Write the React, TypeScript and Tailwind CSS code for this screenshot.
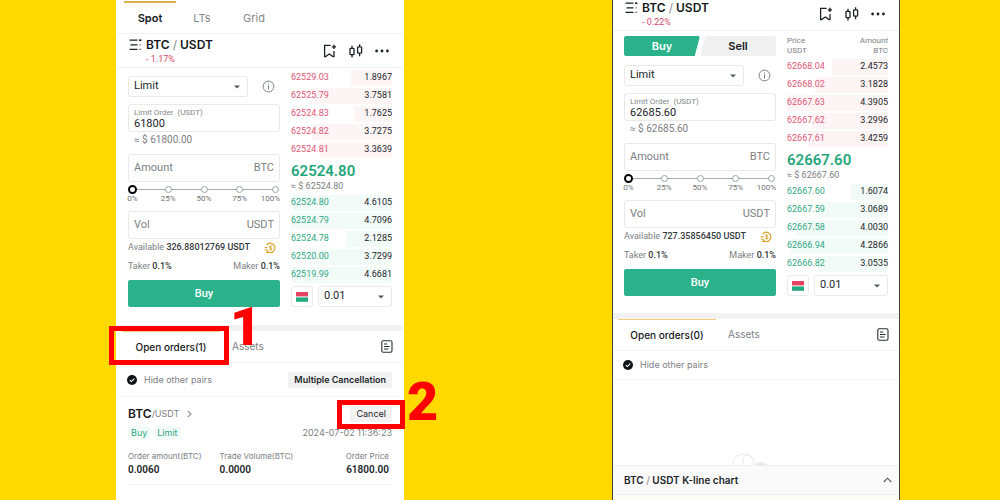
import { useId, useState } from "react";
import type { ReactNode } from "react";

type Level = { price: string; amount: string };

type Market = {
  change: string;
  limitPrice: string;
  available: string;
  last: string;
  depth: number;
  asks: Level[];
  bids: Level[];
};

const pending: Market = {
  change: "- 1.17%",
  limitPrice: "61800",
  available: "326.88012769 USDT",
  last: "62524.80",
  depth: 4.71,
  asks: [
    { price: "62529.03", amount: "1.8967" },
    { price: "62525.79", amount: "3.7581" },
    { price: "62524.83", amount: "1.7625" },
    { price: "62524.82", amount: "3.7275" },
    { price: "62524.81", amount: "3.3639" },
  ],
  bids: [
    { price: "62524.80", amount: "4.6105" },
    { price: "62524.79", amount: "4.7096" },
    { price: "62524.78", amount: "2.1285" },
    { price: "62520.00", amount: "3.7299" },
    { price: "62519.99", amount: "4.6681" },
  ],
};

const cleared: Market = {
  change: "- 0.22%",
  limitPrice: "62685.60",
  available: "727.35856450 USDT",
  last: "62667.60",
  depth: 4.4,
  asks: [
    { price: "62668.04", amount: "2.4573" },
    { price: "62668.02", amount: "3.1828" },
    { price: "62667.63", amount: "4.3905" },
    { price: "62667.62", amount: "3.2996" },
    { price: "62667.61", amount: "3.4259" },
  ],
  bids: [
    { price: "62667.60", amount: "1.6074" },
    { price: "62667.59", amount: "3.0689" },
    { price: "62667.58", amount: "4.0030" },
    { price: "62666.94", amount: "4.2866" },
    { price: "62666.82", amount: "3.0535" },
  ],
};

function Phone({ frame, children }: { frame: string; children: ReactNode }) {
  return (
    <section className={`relative flex min-w-0 flex-col border-x bg-white ${frame}`}>
      {children}
    </section>
  );
}

function PairsIcon() {
  return (
    <svg width="13" height="12" viewBox="0 0 13 12" fill="none" stroke="#1c2126" strokeWidth="1.3">
      <path d="M0.5 1.2H8.5M1.5 5.8H8.5M0.5 10.4H8.5" />
      <path d="M10 1.2H12.4" strokeWidth="1.6" />
      <path d="M10.4 5.8H12M10 10.4H12.4" stroke="#8a8f94" />
    </svg>
  );
}

function BookmarkIcon() {
  return (
    <svg width="14" height="14" viewBox="0 0 14 14" fill="none" stroke="#1c2126" strokeWidth="1.3">
      <path d="M7.6 1.4H1.6V12.6H2.6L6.3 10L10 12.6H11V7" />
      <path d="M8.8 2.9H13M10.9 0.8V5" strokeWidth="1.4" />
    </svg>
  );
}

function CandlesIcon() {
  return (
    <svg width="14" height="14" viewBox="0 0 14 14" fill="none" stroke="#1c2126" strokeWidth="1.3">
      <rect x="1" y="4.3" width="4" height="6.4" rx="0.8" />
      <path d="M3 1.8V4.3M3 10.7V13.6" />
      <rect x="8.6" y="2.8" width="4" height="6.4" rx="0.8" />
      <path d="M10.6 0.2V2.8M10.6 9.2V12.2" />
    </svg>
  );
}

function DotsIcon() {
  return (
    <svg width="14" height="4" viewBox="0 0 14 4" fill="#1c2126">
      <circle cx="1.6" cy="2" r="1.4" />
      <circle cx="7" cy="2" r="1.4" />
      <circle cx="12.4" cy="2" r="1.4" />
    </svg>
  );
}

function InfoIcon() {
  return (
    <svg width="13" height="13" viewBox="0 0 13 13" fill="none" stroke="#7b7f83" strokeWidth="1">
      <circle cx="6.5" cy="6.5" r="5.4" />
      <path d="M6.5 5.6V9.4M6.5 3.4V4.6" strokeWidth="1.1" />
    </svg>
  );
}

function ConvertIcon() {
  return (
    <svg width="12" height="12" viewBox="0 0 12 12" fill="none" stroke="#dba42e" strokeWidth="1.2">
      <path d="M2.6 3A4.6 4.6 0 1 1 4.6 10.3" />
      <path d="M0.8 5.6H3.4M0.8 8H3L4.6 10.3H2" />
      <path
        d="M7.9 4.7C7.6 4 5.4 3.7 5.3 4.9C5.3 6.1 8 5.6 8 6.9C7.9 8.1 5.6 7.9 5.2 7.1M6.6 3.1V8.7"
        strokeWidth="0.9"
      />
    </svg>
  );
}

function RecordsIcon() {
  return (
    <svg width="12" height="13" viewBox="0 0 12 13" fill="none" stroke="#2b2f33" strokeWidth="1.1">
      <rect x="0.8" y="0.8" width="10.2" height="11.4" rx="1.4" />
      <path d="M3 4H6.2M3 6.5H8.6M3 9H7.4" />
    </svg>
  );
}

function Caret() {
  return (
    <svg
      className="pointer-events-none absolute top-1/2 right-2 -translate-y-1/2"
      width="6"
      height="4"
      viewBox="0 0 6 4"
      fill="#55595d"
    >
      <path d="M0 0.4H6L3 3.6Z" />
    </svg>
  );
}

function MarketTabs() {
  const tab = "h-full flex-none w-[52px] border-t-2 pt-px text-center text-[11px]";
  return (
    <nav className="flex h-[34px] items-stretch border-b border-[#f1f1f1] px-[7px] pt-px">
      <button className={`${tab} border-[#d9b24a] font-semibold text-[#15181b]`}>Spot</button>
      <button className={`${tab} border-transparent text-[#85888b]`}>LTs</button>
      <button className={`${tab} border-transparent text-[#85888b]`}>Grid</button>
    </nav>
  );
}

function PairHeader({ change, height }: { change: string; height: string }) {
  return (
    <header className={`flex flex-none items-end border-b border-[#f1f1f1] ${height}`}>
      <div className="flex h-[33px] w-full items-center justify-between pr-[14px] pl-3">
        <div className="grid grid-cols-[13px_auto] gap-x-1">
          <span className="flex items-center">
            <PairsIcon />
          </span>
          <h1 className="text-[12px] leading-4 font-semibold text-[#15181b]">
            BTC <span className="font-normal text-[#85888b]">/</span> USDT
          </h1>
          <p className="col-start-2 font-[Roboto,sans-serif] text-[9px] leading-3 text-[#d8486a]">{change}</p>
        </div>
        <div className="flex items-center gap-3">
          <button aria-label="Add to favorites">
            <BookmarkIcon />
          </button>
          <button aria-label="Chart">
            <CandlesIcon />
          </button>
          <button aria-label="More">
            <DotsIcon />
          </button>
        </div>
      </div>
    </header>
  );
}

function SideSwitch() {
  return (
    <div className="mb-2 flex h-5 text-[11px] font-semibold">
      <button className="flex-1 rounded-xs bg-[#2bb28a] text-white [clip-path:polygon(0_0,100%_0,93%_100%,0_100%)]">
        Buy
      </button>
      <button className="flex-1 rounded-xs bg-[#f0f0f0] text-[#15181b] [clip-path:polygon(7%_0,100%_0,100%_100%,0_100%)]">
        Sell
      </button>
    </div>
  );
}

const box = "rounded-[3px] border border-[#e9e9e9] bg-white";

function AmountField({ label, unit }: { label: string; unit: string }) {
  const id = useId();
  return (
    <div className={`flex h-7 items-center px-[5px] text-[11px] text-[#7d8083] ${box}`}>
      <input
        id={id}
        aria-label={label}
        placeholder={label}
        className="min-w-0 flex-1 bg-transparent outline-none placeholder:text-[#7d8083]"
      />
      <label htmlFor={id}>{unit}</label>
    </div>
  );
}

function PercentSlider() {
  const [value, setValue] = useState(0);
  return (
    <div className="relative h-[29px] pt-[3px]">
      <div className="absolute inset-x-1 top-[7px] h-px bg-[#a9acaf]" />
      <div className="relative flex justify-between">
        {["0%", "25%", "50%", "75%", "100%"].map((mark, i) => (
          <div key={mark} className={`flex w-[9px] flex-col ${i === 4 ? "items-end" : "items-center"}`}>
            <span className="flex size-[9px] items-center justify-center">
              <span className="size-[7px] rounded-full border border-[#a0a3a6] bg-white" />
            </span>
            <span className="text-[8px] leading-[10px] text-[#6f7275]">{mark}</span>
          </div>
        ))}
      </div>
      <input
        type="range"
        aria-label="Percentage of balance"
        min={0}
        max={100}
        value={value}
        onChange={(e) => setValue(Number(e.target.value))}
        className="absolute inset-x-0 top-[3px] h-[9px] w-full appearance-none bg-transparent [&::-webkit-slider-thumb]:size-[9px] [&::-webkit-slider-thumb]:appearance-none [&::-webkit-slider-thumb]:rounded-full [&::-webkit-slider-thumb]:border-2 [&::-webkit-slider-thumb]:border-solid [&::-webkit-slider-thumb]:border-black [&::-webkit-slider-thumb]:bg-white"
      />
    </div>
  );
}

function OrderForm({ market }: { market: Market }) {
  const id = useId();
  return (
    <form className="pt-px font-[Roboto,sans-serif]" onSubmit={(e) => e.preventDefault()}>
      <div className="flex items-center justify-between pr-[5px]">
        <div className="relative w-[120px]">
          <select
            aria-label="Order type"
            className={`block h-[21px] w-full appearance-none px-[5px] text-[11px] text-[#222529] ${box}`}
          >
            <option>Limit</option>
          </select>
          <Caret />
        </div>
        <button type="button" aria-label="About order types">
          <InfoIcon />
        </button>
      </div>
      <div className={`mt-[7px] flex h-7 flex-col px-[5px] pt-[3px] ${box}`}>
        <label htmlFor={id} className="text-[8px] leading-[10px] text-[#85888b]">
          Limit Order&nbsp; (USDT)
        </label>
        <input
          id={id}
          defaultValue={market.limitPrice}
          className="w-full bg-transparent text-[11px] leading-3 text-[#222529] outline-none"
        />
      </div>
      <p className="mb-[6px] pl-[6px] text-[10px] leading-4 text-[#7d8083]">
        ≈ $ {Number(market.limitPrice).toFixed(2)}
      </p>
      <AmountField label="Amount" unit="BTC" />
      <PercentSlider />
      <AmountField label="Vol" unit="USDT" />
      <div className="flex h-[18px] items-center justify-between pr-1 text-[9px] text-[#7d8083]">
        <p>
          Available <span className="font-medium text-[#33373a]">{market.available}</span>
        </p>
        <button type="button" aria-label="Convert">
          <ConvertIcon />
        </button>
      </div>
      <div className="mb-[3px] flex h-5 items-center justify-between text-[9px] text-[#7d8083]">
        <p>
          Taker <span className="font-medium text-[#33373a]">0.1%</span>
        </p>
        <p>
          Maker <span className="font-medium text-[#33373a]">0.1%</span>
        </p>
      </div>
      <button className="block h-[27px] w-full rounded-xs bg-[#2bb28a] pt-px text-[11px] font-medium text-white">
        Buy
      </button>
    </form>
  );
}

function Levels({ label, levels, depth, text, fill }: { label: string; levels: Level[]; depth: number; text: string; fill: string }) {
  return (
    <table aria-label={label} className="block w-full text-[9px]">
      <tbody className="block">
        {levels.map((level) => (
          <tr key={level.price} className="relative flex h-[18px] items-center justify-between">
            <td className={`relative z-10 ${text}`}>{level.price}</td>
            <td className="relative z-10 text-[#222529]">{level.amount}</td>
            <td
              aria-hidden="true"
              className={`absolute inset-y-px right-0 ${fill}`}
              style={{ width: `${(Number(level.amount) / depth) * 100}%` }}
            />
          </tr>
        ))}
      </tbody>
    </table>
  );
}

function OrderBook({ market }: { market: Market }) {
  return (
    <div className="pt-px font-[Roboto,sans-serif]">
      <Levels label="Asks" levels={market.asks} depth={market.depth} text="text-[#dd5675]" fill="bg-[#fdf4f5]" />
      <p className="mt-[3px] text-[15px] leading-[18px] font-semibold text-[#1fa67c]">{market.last}</p>
      <p className="mb-[2px] text-[9px] leading-3 text-[#7d8083]">≈ $ {market.last}</p>
      <Levels label="Bids" levels={market.bids} depth={market.depth} text="text-[#2fa883]" fill="bg-[#f3fbf8]" />
      <div className="mt-[2px] flex gap-[5px]">
        <button aria-label="Order book layout" className={`flex h-[21px] w-[22px] flex-none items-center justify-center ${box}`}>
          <svg width="12" height="10" viewBox="0 0 12 10">
            <rect width="12" height="4.4" fill="#e5425f" />
            <rect y="5.4" width="12" height="4.4" fill="#25a97f" />
          </svg>
        </button>
        <div className="relative min-w-0 flex-1">
          <select
            aria-label="Price step"
            className={`block h-[21px] w-full appearance-none px-[5px] text-[11px] text-[#222529] ${box}`}
          >
            <option>0.01</option>
          </select>
          <Caret />
        </div>
      </div>
    </div>
  );
}

function OrderTabs({ count, callout }: { count: number; callout?: ReactNode }) {
  return (
    <div className="flex h-8 flex-none items-stretch border-b border-[#f3f3f3] pr-[10px] pl-[5px] text-[10px]">
      <div className="relative flex w-[98px] flex-none">
        <button className="w-full border-t border-[#f3cf7a] text-center font-medium text-[#15181b]">
          Open orders({count})
        </button>
        {callout}
      </div>
      <button className="ml-3 text-[#7d8083]">Assets</button>
      <button aria-label="Order history" className="ml-auto">
        <RecordsIcon />
      </button>
    </div>
  );
}

function HidePairs() {
  return (
    <label className="flex items-center gap-[7px] text-[9px] text-[#7d8083]">
      <span className="relative flex size-[10px]">
        <input type="checkbox" defaultChecked className="size-full appearance-none rounded-full bg-[#111417]" />
        <svg
          className="pointer-events-none absolute inset-0"
          width="10"
          height="10"
          viewBox="0 0 10 10"
          fill="none"
          stroke="#fff"
          strokeWidth="1.1"
        >
          <path d="M2.8 5.2L4.3 6.6L7.3 3.7" />
        </svg>
      </span>
      Hide other pairs
    </label>
  );
}

function Figure({ label, value, align }: { label: string; value: string; align: string }) {
  return (
    <div className={align}>
      <dt className="text-[8px] leading-[13px] text-[#7d8083]">{label}</dt>
      <dd className="font-[Roboto,sans-serif] text-[10px] leading-[13px] font-semibold text-[#222529]">{value}</dd>
    </div>
  );
}

function OpenOrder() {
  return (
    <article className="mx-[11px] border-b border-[#f3f3f3] pt-[9px] pb-2">
      <div className="flex h-4 items-center justify-between">
        <h2 className="flex items-center text-[12px] font-semibold text-[#15181b]">
          BTC<span className="text-[9px] font-normal text-[#7d8083]">/USDT</span>
          <svg className="ml-2" width="5" height="8" viewBox="0 0 5 8" fill="none" stroke="#85888b" strokeWidth="1.1">
            <path d="M0.8 0.8L4 4L0.8 7.2" />
          </svg>
        </h2>
        <div className="relative">
          <button className="block h-4 rounded-xs bg-[#f2f2f2] px-[6px] text-[9px] text-[#222529]">Cancel</button>
          <span aria-hidden="true" className="absolute -inset-x-[13px] -top-[6px] -bottom-[7px] border-[5px] border-[#ff0000]" />
          <strong className="absolute -top-[31px] left-full pl-[15px] font-[Roboto,sans-serif] text-[54px] leading-none font-black text-[#ff0000]">
            2
          </strong>
        </div>
      </div>
      <div className="flex h-[22px] items-center justify-between text-[9px]">
        <div className="flex gap-1 text-[#2fa883]">
          <span className="rounded-xs bg-[#f2fbf8] px-[3px]">Buy</span>
          <span className="rounded-xs bg-[#f2fbf8] px-[3px]">Limit</span>
        </div>
        <time className="text-[#7d8083]">2024-07-02 11:36:23</time>
      </div>
      <dl className="mt-[6px] flex gap-[18px] pr-[3px]">
        <Figure label="Order amount(BTC)" value="0.0060" align="text-left" />
        <Figure label="Trade Volume(BTC)" value="0.0000" align="text-left" />
        <Figure label="Order Price" value="61800.00" align="ml-auto text-right" />
      </dl>
    </article>
  );
}

export default function App() {
  return (
    <main className="grid min-h-screen grid-cols-[minmax(0,116fr)_minmax(0,288fr)_minmax(0,208fr)_minmax(0,288fr)_minmax(0,100fr)] overflow-hidden bg-[#ffd900] font-[Inter,sans-serif]">
      <div />
      <Phone frame="border-white">
        <MarketTabs />
        <PairHeader change={pending.change} height="h-[34px]" />
        <div className="grid grid-cols-[minmax(0,152fr)_minmax(0,101fr)] gap-[11px] px-[11px] pb-[18px]">
          <div className="pt-[7px]">
            <OrderForm market={pending} />
          </div>
          <OrderBook market={pending} />
        </div>
        <div className="h-[6px] flex-none bg-[#f2f2f2]" />
        <OrderTabs
          count={1}
          callout={
            <>
              <span aria-hidden="true" className="absolute -top-[5px] -right-[9px] -bottom-[3px] -left-[13px] border-[5px] border-[#ff0000]" />
              <strong className="absolute -top-[31px] left-full z-10 pl-[10px] font-[Roboto,sans-serif] text-[54px] leading-none font-black text-[#ff0000]">
                1
              </strong>
            </>
          }
        />
        <div className="flex h-[34px] flex-none items-center justify-between border-b border-[#f5f5f5] pr-[11px] pl-[10px]">
          <HidePairs />
          <button className="h-4 rounded-xs bg-[#f2f2f2] px-[6px] text-[9px] font-semibold text-[#222529]">
            Multiple Cancellation
          </button>
        </div>
        <OpenOrder />
      </Phone>
      <div />
      <Phone frame="border-[#45433a]">
        <PairHeader change={cleared.change} height="h-[31px]" />
        <div className="grid grid-cols-[minmax(0,152fr)_minmax(0,101fr)] gap-[11px] px-[11px] pt-[5px] pb-[17px]">
          <div>
            <SideSwitch />
            <OrderForm market={cleared} />
          </div>
          <div>
            <div className="mb-px flex justify-between font-[Roboto,sans-serif] text-[8px] leading-[10px] text-[#7d8083]">
              <p>
                Price
                <br />
                USDT
              </p>
              <p className="text-right">
                Amount
                <br />
                BTC
              </p>
            </div>
            <OrderBook market={cleared} />
          </div>
        </div>
        <div className="h-[6px] flex-none bg-[#f2f2f2]" />
        <OrderTabs count={0} />
        <div className="flex h-[29px] flex-none items-center border-b border-[#f5f5f5] pl-[10px]">
          <HidePairs />
        </div>
        <div className="flex flex-1 items-end justify-center">
          <svg width="48" height="12" viewBox="0 0 48 12" fill="none" stroke="#ececec">
            <path d="M1 12C1 5 5 1 12 1C18 1 22 5 22 12M11 12V5C12 1 20 1 21 6" />
            <path d="M23 12C26 9 32 9 35 12Z" fill="#e6e6e6" />
          </svg>
        </div>
        <footer className="flex h-[30px] flex-none items-center justify-between border-y border-[#efefef] bg-[#fafafa] pr-[7px] pl-[11px]">
          <h2 className="text-[10px] font-semibold text-[#222529]">
            BTC <span className="font-normal text-[#85888b]">/</span> USDT K-line chart
          </h2>
          <button aria-label="Expand chart">
            <svg width="9" height="6" viewBox="0 0 9 6" fill="none" stroke="#55595d" strokeWidth="1.1">
              <path d="M0.8 5L4.5 1.2L8.2 5" />
            </svg>
          </button>
        </footer>
        <div className="h-[5px] flex-none bg-[#fdfcf6]" />
      </Phone>
      <div />
    </main>
  );
}
